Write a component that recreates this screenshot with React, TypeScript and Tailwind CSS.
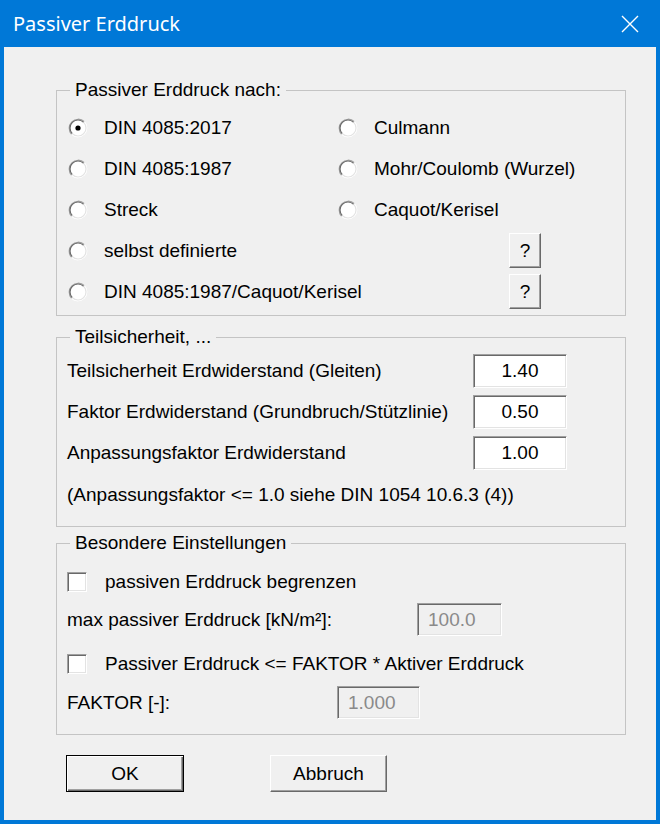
import React from "react";

const LEFT_OPTIONS = ["DIN 4085:2017", "DIN 4085:1987", "Streck"];
const RIGHT_OPTIONS = ["Culmann", "Mohr/Coulomb (Wurzel)", "Caquot/Kerisel"];

const FACTORS = [
  { label: "Teilsicherheit Erdwiderstand (Gleiten)", value: "1.40" },
  { label: "Faktor Erdwiderstand (Grundbruch/Stützlinie)", value: "0.50" },
  { label: "Anpassungsfaktor Erdwiderstand", value: "1.00" },
];

function Radio({ checked }: { checked?: boolean }) {
  return (
    <svg width="20" height="20" viewBox="0 0 20 20" className="shrink-0">
      <circle cx="10" cy="10" r="9" fill="#fff" />
      <path d="M3.64 16.36 A9 9 0 0 1 16.36 3.64" fill="none" stroke="#a0a0a0" strokeWidth="1.2" />
      <path d="M16.36 3.64 A9 9 0 0 1 3.64 16.36" fill="none" stroke="#ffffff" strokeWidth="1.2" />
      <path d="M4.34 15.66 A8 8 0 0 1 15.66 4.34" fill="none" stroke="#696969" strokeWidth="1.2" />
      <path d="M15.66 4.34 A8 8 0 0 1 4.34 15.66" fill="none" stroke="#e3e3e3" strokeWidth="1.2" />
      {checked && <circle cx="10" cy="10" r="2.6" fill="#000" />}
    </svg>
  );
}

function RadioItem({ label, checked }: { label: string; checked?: boolean }) {
  return (
    <div className="flex items-center">
      <Radio checked={checked} />
      <span className="ml-[16px] whitespace-nowrap">{label}</span>
    </div>
  );
}

function HelpButton() {
  return (
    <button className="w-[32px] h-[35px] bg-[#f0f0f0] border border-t-white border-l-white border-b-[#696969] border-r-[#696969] shadow-[inset_-1px_-1px_0_#a0a0a0] text-[19px] leading-none">
      ?
    </button>
  );
}

function Checkbox() {
  return (
    <div className="w-[20px] h-[20px] shrink-0 bg-white border border-t-[#a0a0a0] border-l-[#a0a0a0] border-b-white border-r-white shadow-[inset_1px_1px_0_#696969,inset_-1px_-1px_0_#e3e3e3]" />
  );
}

export default function App() {
  return (
    <div className="w-[661px] h-[828px] bg-white font-['Liberation_Sans',Arial,sans-serif] text-[19px] text-black">
      <div className="w-[660px] h-[824px] bg-[#0078d7] px-[4px] pb-[4px] flex flex-col">
        {/* Title bar */}
        <div className="h-[47px] shrink-0 flex items-center justify-between pl-[9px] pr-[17px]">
          <span className="font-['Noto_Sans',sans-serif] text-[20px] text-white">Passiver Erddruck</span>
          <svg width="18" height="18" viewBox="0 0 18 18">
            <path d="M1 1 L17 17 M17 1 L1 17" stroke="#fff" strokeWidth="1.4" />
          </svg>
        </div>

        {/* Body */}
        <div className="flex-1 bg-[#f0f0f0] pl-[52px] pt-[32px] leading-[22px]">
          {/* Group 1 */}
          <fieldset className="w-[570px] border border-[#c4c4c4] pt-[6px] pb-[3px]">
            <legend className="ml-[13px] px-[5px]">Passiver Erddruck nach:</legend>
            <div className="grid grid-cols-[270px_1fr] pl-[11px]">
              {LEFT_OPTIONS.map((opt, i) => (
                <React.Fragment key={opt}>
                  <div className="h-[41px] flex items-center">
                    <RadioItem label={opt} checked={i === 0} />
                  </div>
                  <div className="h-[41px] flex items-center">
                    <RadioItem label={RIGHT_OPTIONS[i]} />
                  </div>
                </React.Fragment>
              ))}
            </div>
            {["selbst definierte", "DIN 4085:1987/Caquot/Kerisel"].map((opt) => (
              <div key={opt} className="h-[41px] flex items-center justify-between pl-[11px] pr-[84px]">
                <RadioItem label={opt} />
                <HelpButton />
              </div>
            ))}
          </fieldset>

          {/* Group 2 */}
          <fieldset className="w-[570px] mt-[10px] border border-[#c4c4c4] pt-[6px] pb-[20px] pl-[10px] pr-[58px]">
            <legend className="ml-[3px] px-[5px]">Teilsicherheit, ...</legend>
            <div className="flex flex-col gap-[7px]">
              {FACTORS.map((f) => (
                <div key={f.label} className="h-[34px] flex items-center justify-between">
                  <span className="whitespace-nowrap">{f.label}</span>
                  <div className="w-[94px] h-[34px] bg-white flex items-center justify-center border border-t-[#a0a0a0] border-l-[#a0a0a0] border-b-white border-r-white shadow-[inset_1px_1px_0_#696969,inset_-1px_-1px_0_#e3e3e3]">
                    {f.value}
                  </div>
                </div>
              ))}
            </div>
            <div className="mt-[14px]">(Anpassungsfaktor &lt;= 1.0 siehe DIN 1054 10.6.3 (4))</div>
          </fieldset>

          {/* Group 3 */}
          <fieldset className="w-[570px] mt-[5px] border border-[#c4c4c4] pt-[11px] pb-[15px] pl-[10px]">
            <legend className="ml-[3px] px-[5px]">Besondere Einstellungen</legend>
            <div className="h-[34px] flex items-center">
              <Checkbox />
              <span className="ml-[18px]">passiven Erddruck begrenzen</span>
            </div>
            <div className="mt-[4px] h-[33px] flex items-center">
              <span className="w-[350px]">max passiver Erddruck [kN/m²]:</span>
              <div className="w-[85px] h-[33px] pl-[10px] flex items-center text-[#8a8a8a] border border-t-[#a0a0a0] border-l-[#a0a0a0] border-b-white border-r-white shadow-[inset_1px_1px_0_#696969,inset_-1px_-1px_0_#e3e3e3]">
                100.0
              </div>
            </div>
            <div className="mt-[11px] h-[34px] flex items-center">
              <Checkbox />
              <span className="ml-[18px]">Passiver Erddruck &lt;= FAKTOR * Aktiver Erddruck</span>
            </div>
            <div className="mt-[5px] h-[33px] flex items-center">
              <span className="w-[270px]">FAKTOR [-]:</span>
              <div className="w-[83px] h-[33px] pl-[10px] flex items-center text-[#8a8a8a] border border-t-[#a0a0a0] border-l-[#a0a0a0] border-b-white border-r-white shadow-[inset_1px_1px_0_#696969,inset_-1px_-1px_0_#e3e3e3]">
                1.000
              </div>
            </div>
          </fieldset>

          {/* Buttons */}
          <div className="mt-[20px] flex items-center pl-[10px] gap-[86px]">
            <button className="w-[118px] h-[37px] bg-[#f0f0f0] border border-black shadow-[inset_1px_1px_0_#fff,inset_-1px_-1px_0_#696969,inset_-2px_-2px_0_#a0a0a0]">
              OK
            </button>
            <button className="w-[117px] h-[37px] bg-[#f0f0f0] border border-t-white border-l-white border-b-[#696969] border-r-[#696969] shadow-[inset_-1px_-1px_0_#a0a0a0]">
              Abbruch
            </button>
          </div>
        </div>
      </div>
    </div>
  );
}
